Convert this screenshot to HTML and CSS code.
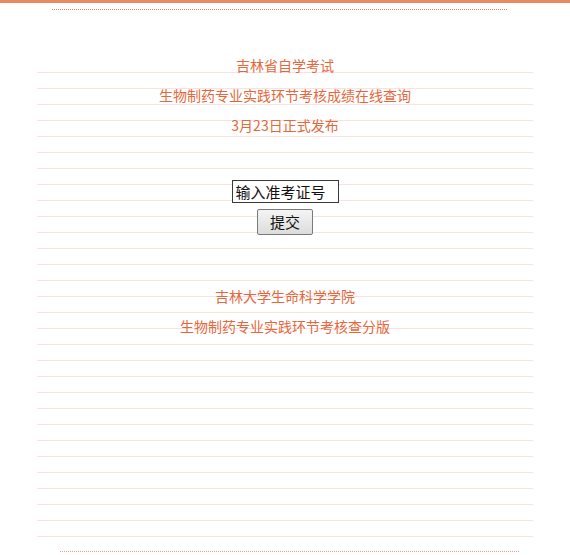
FILE: index.html
```html
<!DOCTYPE html>
<html lang="zh-CN">
<head>
<meta charset="utf-8">
<title>生物制药专业实践环节考核成绩在线查询</title>
<link rel="stylesheet" href="styles.css">
</head>
<body>
<div class="topbar"></div>
<div class="rule rule-top"></div>
<main class="paper">
  <p class="line">吉林省自学考试</p>
  <p class="line">生物制药专业实践环节考核成绩在线查询</p>
  <p class="line">3月23日正式发布</p>
  <form class="query" onsubmit="return false;">
    <input class="ticket" type="text" value="输入准考证号">
    <button class="submit" type="submit">提交</button>
  </form>
  <p class="line line-org">吉林大学生命科学学院</p>
  <p class="line">生物制药专业实践环节考核查分版</p>
</main>
<div class="rule rule-bottom"></div>
</body>
</html>
```

FILE: styles.css
```css
html, body {
  margin: 0;
  padding: 0;
  background: #ffffff;
}

body {
  font-family: "Noto Sans CJK SC", "Liberation Sans", sans-serif;
  overflow: hidden;
}

.topbar {
  height: 3px;
  background: #ea8a62;
}

/* 1px dotted divider */
.rule {
  height: 1px;
  background: repeating-linear-gradient(to right, #e8825a 0, #e8825a 1px, transparent 1px, transparent 2px);
}

.rule-top {
  margin: 6px 63px 0 52px;
}

/* lined note paper, first ruled line 31px below the top edge */
.paper {
  margin: 31px 37px 0 37px;
  height: 500px;
  padding-top: 9px;
  box-sizing: border-box;
  background:
    linear-gradient(#ffffff, #ffffff) top left / 100% 16px no-repeat,
    repeating-linear-gradient(to bottom, transparent 0, transparent 15px, #fbe1dc 15px, #fbe1dc 16px);
  display: flex;
  flex-direction: column;
  align-items: center;
}

.line {
  margin: 0;
  height: 30px;
  line-height: 30px;
  font-size: 14px;
  color: #e5683d;
  text-align: center;
  white-space: nowrap;
}

.line-org {
  margin-top: 46px;
}

.query {
  margin-top: 40px;
  display: flex;
  flex-direction: column;
  align-items: center;
  gap: 6px;
}

.ticket {
  width: 107px;
  height: 23px;
  box-sizing: border-box;
  border: 1px solid #3a3a3a;
  padding: 0 3px;
  font-family: "Noto Sans CJK SC", sans-serif;
  font-size: 15px;
  color: #111111;
  background: #ffffff;
  outline: none;
}

.submit {
  width: 56px;
  height: 26px;
  box-sizing: border-box;
  border: 1px solid #7a7a7a;
  border-radius: 2px;
  background: linear-gradient(#f4f4f4, #dcdcdc);
  font-family: "Noto Sans CJK SC", sans-serif;
  font-size: 15px;
  color: #111111;
  padding: 0;
  line-height: 22px;
}

.rule-bottom {
  margin: 10px 50px 0 60px;
  background: repeating-linear-gradient(to right, #ec9a9a 0, #ec9a9a 1px, transparent 1px, transparent 2px);
}
```
